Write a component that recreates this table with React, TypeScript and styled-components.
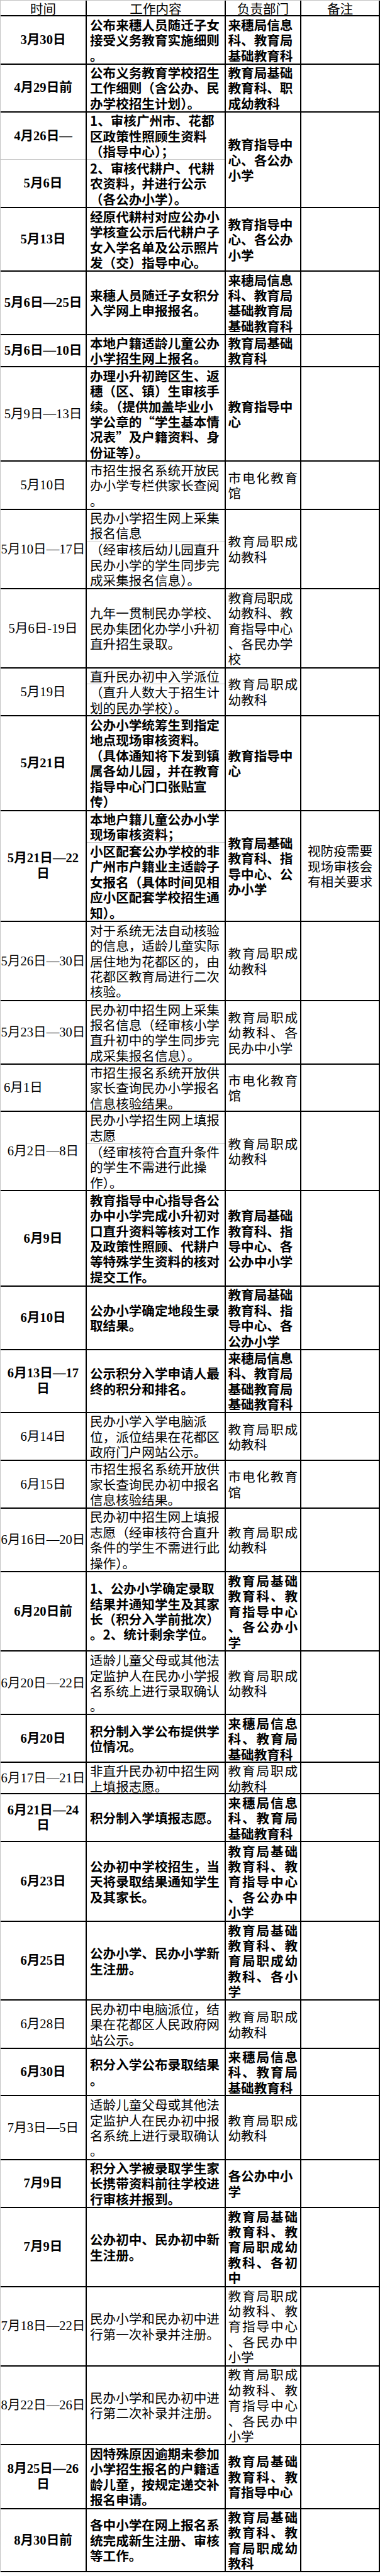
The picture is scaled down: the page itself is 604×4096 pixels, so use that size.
import React from "react";
import styled, { createGlobalStyle, css } from "styled-components";

// reference is 843 wide, window is 604 wide
const S = 0.716;

const GlobalStyle = createGlobalStyle`
  body {
    margin: 0;
    background: #fff;
  }
  * {
    box-sizing: border-box;
  }
`;

type Kind = "date" | "text" | "dept" | "note" | "head";

const pads: Record<Kind, string> = {
  date: "0 2px",
  text: "0 3px 0 5px",
  dept: "0 4px 0 3.5px",
  note: "0 4px",
  head: "0 4px",
};

const Table = styled.div`
  width: 604px;
  border-left: 1px solid #c4c4c4;
  border-top: 1px solid #c4c4c4;
  color: #000;
  font-size: 20.6px;
  line-height: 24.4px;
  font-family: "Noto Sans CJK SC", "Liberation Serif", sans-serif;
`;

const Row = styled.div<{ $h: number }>`
  display: grid;
  grid-template-columns: 137px 221px 120px 1fr;
  height: ${(p) => p.$h * S}px;
  border-bottom: 2px solid #000;
`;

const Pane = styled.div<{ $kind: Kind; $bold?: boolean; $left?: boolean }>`
  display: flex;
  flex-direction: column;
  justify-content: center;
  align-items: ${(p) =>
    p.$kind === "text" || p.$kind === "dept" || p.$left ? "stretch" : "center"};
  padding: ${(p) => pads[p.$kind]};
  min-width: 0;
  font-weight: ${(p) => (p.$bold ? 700 : 400)};
  ${(p) =>
    p.$kind === "head" &&
    css`
      line-height: 22px;
    `}
  ${(p) =>
    p.$kind === "date" &&
    css`
      font-family: "Liberation Serif", "Noto Sans CJK SC", serif;
      padding-left: ${p.$left ? "5px" : "2px"};
    `}
`;

const Cell = styled(Pane)`
  border-right: 2px solid #000;
`;

const Stack = styled.div`
  display: flex;
  flex-direction: column;
  min-width: 0;
  border-right: 2px solid #000;
`;

const Part = styled(Pane)<{ $h: number }>`
  flex: ${(p) => p.$h} 1 0;
  border-bottom: 1px solid #c8c8c8;
  &:last-child {
    border-bottom: 0;
  }
`;

const Line = styled.span<{ $spread?: boolean }>`
  display: block;
  ${(p) =>
    p.$spread
      ? css`
          text-align: justify;
          text-align-last: justify;
          &:last-child {
            text-align-last: auto;
          }
        `
      : css`
          white-space: nowrap;
        `}
`;

type Piece = { h: number; t: string };
type Txt = string | Piece[];

interface RowData {
  h: number;
  d: Txt;
  db?: boolean;
  dl?: boolean;
  c: Txt;
  hv?: boolean;
  p: string;
  sp?: boolean;
  n?: string;
}

const rows: RowData[] = [
  { h: 107, d: "3月30日", db: true, c: "公布来穗人员随迁子女/接受义务教育实施细则/。", hv: true, p: "来穗局信息/科、教育局/基础教育科" },
  { h: 106, d: "4月29日前", db: true, c: "公布义务教育学校招生/工作细则（含公办、民/办学校招生计划）。", hv: true, p: "教育局基础/教育科、职/成幼教科" },
  {
    h: 213,
    d: [{ h: 106, t: "4月26日—" }, { h: 107, t: "5月6日" }],
    db: true,
    c: [
      { h: 106, t: "1、审核广州市、花都/区政策性照顾生资料/（指导中心）；" },
      { h: 107, t: "2、审核代耕户、代耕/农资料，并进行公示/（各公办小学）。" },
    ],
    hv: true,
    p: "教育指导中/心、各公办/小学",
  },
  { h: 141, d: "5月13日", db: true, c: "经原代耕村对应公办小/学核查公示后代耕户子/女入学名单及公示照片/发（交）指导中心。", hv: true, p: "教育指导中/心、各公办/小学" },
  { h: 141, d: "5月6日—25日", db: true, c: "来穗人员随迁子女积分/入学网上申报报名。", hv: true, p: "来穗局信息/科、教育局/基础教育局/基础教育科" },
  { h: 71, d: "5月6日—10日", db: true, c: "本地户籍适龄儿童公办/小学招生网上报名。", hv: true, p: "教育局基础/教育科" },
  { h: 210, d: "5月9日—13日", c: "办理小升初跨区生、返/穗（区、镇）生审核手/续。（提供加盖毕业小/学公章的“学生基本情/况表”及户籍资料、身/份证等）。", hv: true, p: "教育指导中/心" },
  { h: 107, d: "5月10日", c: "市招生报名系统开放民/办小学专栏供家长查阅/。", p: "市电化教育/馆", sp: true },
  {
    h: 176,
    d: "5月10日—17日",
    c: [
      { h: 70, t: "民办小学招生网上采集/报名信息" },
      { h: 106, t: "（经审核后幼儿园直升/民办小学的学生同步完/成采集报名信息）。" },
    ],
    p: "教育局职成/幼教科",
    sp: true,
  },
  { h: 176, d: "5月6日-19日", c: "九年一贯制民办学校、/民办集团化办学小升初/直升招生录取。", p: "教育局职成/幼教科、教/育指导中心/、各民办学/校" },
  {
    h: 106,
    d: "5月19日",
    c: [
      { h: 35, t: "直升民办初中入学派位" },
      { h: 71, t: "（直升人数大于招生计/划的民办学校）。" },
    ],
    p: "教育局职成/幼教科",
    sp: true,
  },
  { h: 211, d: "5月21日", db: true, c: "公办小学统筹生到指定/地点现场审核资料。/（具体通知将下发到镇/属各幼儿园，并在教育/指导中心门口张贴宣/传）", hv: true, p: "教育指导中/心" },
  {
    h: 246,
    d: "5月21日—22/日",
    db: true,
    c: [
      { h: 70, t: "本地户籍儿童公办小学/现场审核资料；" },
      { h: 176, t: "小区配套公办学校的非/广州市户籍业主适龄子/女报名（具体时间见相/应小区配套学校招生通/知）。" },
    ],
    hv: true,
    p: "教育局基础/教育科、指/导中心、公/办小学",
    n: "视防疫需要/现场审核会/有相关要求",
  },
  { h: 176, d: "5月26日—30日", c: "对于系统无法自动核验/的信息，适龄儿童实际/居住地为花都区的，由/花都区教育局进行二次/核验。", p: "教育局职成/幼教科", sp: true },
  { h: 141, d: "5月23日—30日", c: "民办初中招生网上采集/报名信息（经审核小学/直升初中的学生同步完/成采集报名信息）。", p: "教育局职成/幼教科、各/民办中小学", sp: true },
  { h: 105, d: "6月1日", dl: true, c: "市招生报名系统开放供/家长查询民办小学报名/信息核验结果。", p: "市电化教育/馆", sp: true },
  {
    h: 176,
    d: "6月2日—8日",
    c: [
      { h: 71, t: "民办小学招生网上填报/志愿" },
      { h: 105, t: "（经审核符合直升条件/的学生不需进行此操/作）。" },
    ],
    p: "教育局职成/幼教科",
    sp: true,
  },
  { h: 212, d: "6月9日", db: true, c: "教育指导中心指导各公/办中小学完成小升初对/口直升资料等核对工作/及政策性照顾、代耕户/等特殊学生资料的核对/提交工作。", hv: true, p: "教育局基础/教育科、指/导中心、各/公办中小学" },
  { h: 141, d: "6月10日", db: true, c: "公办小学确定地段生录/取结果。", hv: true, p: "教育局基础/教育科、指/导中心、各/公办小学" },
  { h: 140, d: "6月13日—17/日", db: true, c: "公示积分入学申请人最/终的积分和排名。", hv: true, p: "来穗局信息/科、教育局/基础教育局/基础教育科" },
  { h: 106, d: "6月14日", c: "民办小学入学电脑派/位，派位结果在花都区/政府门户网站公示。", p: "教育局职成/幼教科", sp: true },
  { h: 106, d: "6月15日", c: "市招生报名系统开放供/家长查询民办初中报名/信息核验结果。", p: "市电化教育/馆", sp: true },
  { h: 141, d: "6月16日—20日", c: "民办初中招生网上填报/志愿（经审核符合直升/条件的学生不需进行此/操作）。", p: "教育局职成/幼教科", sp: true },
  { h: 177, d: "6月20日前", db: true, c: "1、公办小学确定录取/结果并通知学生及其家/长（积分入学前批次）/。2、统计剩余学位。", hv: true, p: "教育局基础/教育科、教/育指导中心/、各公办小/学", sp: true },
  { h: 141, d: "6月20日—22日", c: "适龄儿童父母或其他法/定监护人在民办小学报/名系统上进行录取确认/。", p: "教育局职成/幼教科", sp: true },
  { h: 106, d: "6月20日", db: true, c: "积分制入学公布提供学/位情况。", hv: true, p: "来穗局信息/科、教育局/基础教育科", sp: true },
  { h: 70, d: "6月17日—21日", c: "非直升民办初中招生网/上填报志愿。", p: "教育局职成/幼教科", sp: true },
  { h: 106, d: "6月21日—24/日", db: true, c: "积分制入学填报志愿。", hv: true, p: "来穗局信息/科、教育局/基础教育科", sp: true },
  { h: 177, d: "6月23日", db: true, c: "公办初中学校招生，当/天将录取结果通知学生/及其家长。", hv: true, p: "教育局基础/教育科、教/育指导中心/、各公办中/小学", sp: true },
  { h: 175, d: "6月25日", db: true, c: "公办小学、民办小学新/生注册。", hv: true, p: "教育局基础/教育科、教/育局职成幼/教科、各小/学", sp: true },
  { h: 107, d: "6月28日", c: "民办初中电脑派位，结/果在花都区人民政府网/站公示。", p: "教育局职成/幼教科", sp: true },
  { h: 105, d: "6月30日", db: true, c: "积分入学公布录取结果/。", hv: true, p: "来穗局信息/科、教育局/基础教育科", sp: true },
  { h: 142, d: "7月3日—5日", c: "适龄儿童父母或其他法/定监护人在民办初中报/名系统上进行录取确认/。", p: "教育局职成/幼教科", sp: true },
  { h: 106, d: "7月9日", db: true, c: "积分入学被录取学生家/长携带资料前往学校进/行审核并报到。", hv: true, p: "各公办中小/学" },
  { h: 176, d: "7月9日", db: true, c: "公办初中、民办初中新/生注册。", hv: true, p: "教育局基础/教育科、教/育局职成幼/教科、各初/中", sp: true },
  { h: 176, d: "7月18日—22日", c: "民办小学和民办初中进/行第一次补录并注册。", p: "教育局职成/幼教科、教/育指导中心/、各民办中/小学", sp: true },
  { h: 175, d: "8月22日—26日", c: "民办小学和民办初中进/行第二次补录并注册。", p: "教育局职成/幼教科、教/育指导中心/、各民办中/小学", sp: true },
  { h: 142, d: "8月25日—26/日", db: true, c: "因特殊原因逾期未参加/小学招生报名的户籍适/龄儿童，按规定递交补/报名申请。", hv: true, p: "教育局基础/教育科、教/育指导中心", sp: true },
  { h: 140, d: "8月30日前", db: true, c: "各中小学在网上报名系/统完成新生注册、审核/等工作。", hv: true, p: "教育局基础/教育科、教/育局职成幼/教科", sp: true },
];

const lines = (t: string, spread?: boolean) =>
  t.split("/").map((s, i) => (
    <Line key={i} $spread={spread}>
      {s}
    </Line>
  ));

const Column = ({
  txt,
  kind,
  bold,
  left,
}: {
  txt: Txt;
  kind: Kind;
  bold?: boolean;
  left?: boolean;
}) => {
  if (typeof txt === "string") {
    return (
      <Cell $kind={kind} $bold={bold} $left={left}>
        {lines(txt)}
      </Cell>
    );
  }
  return (
    <Stack>
      {txt.map((piece, i) => (
        <Part key={i} $h={piece.h} $kind={kind} $bold={bold} $left={left}>
          {lines(piece.t)}
        </Part>
      ))}
    </Stack>
  );
};

const App = () => {
  return (
    <>
      <GlobalStyle />
      <Table>
        <Row $h={35}>
          <Cell $kind="head">时间</Cell>
          <Cell $kind="head">工作内容</Cell>
          <Cell $kind="head">负责部门</Cell>
          <Cell $kind="head">备注</Cell>
        </Row>
        {rows.map((r, i) => (
          <Row key={i} $h={r.h}>
            <Column txt={r.d} kind="date" bold={r.db} left={r.dl} />
            <Column txt={r.c} kind="text" bold={r.hv} />
            <Cell $kind="dept" $bold={r.hv}>
              {lines(r.p, r.sp)}
            </Cell>
            <Cell $kind="note">{r.n ? lines(r.n) : null}</Cell>
          </Row>
        ))}
      </Table>
    </>
  );
};

export default App;
